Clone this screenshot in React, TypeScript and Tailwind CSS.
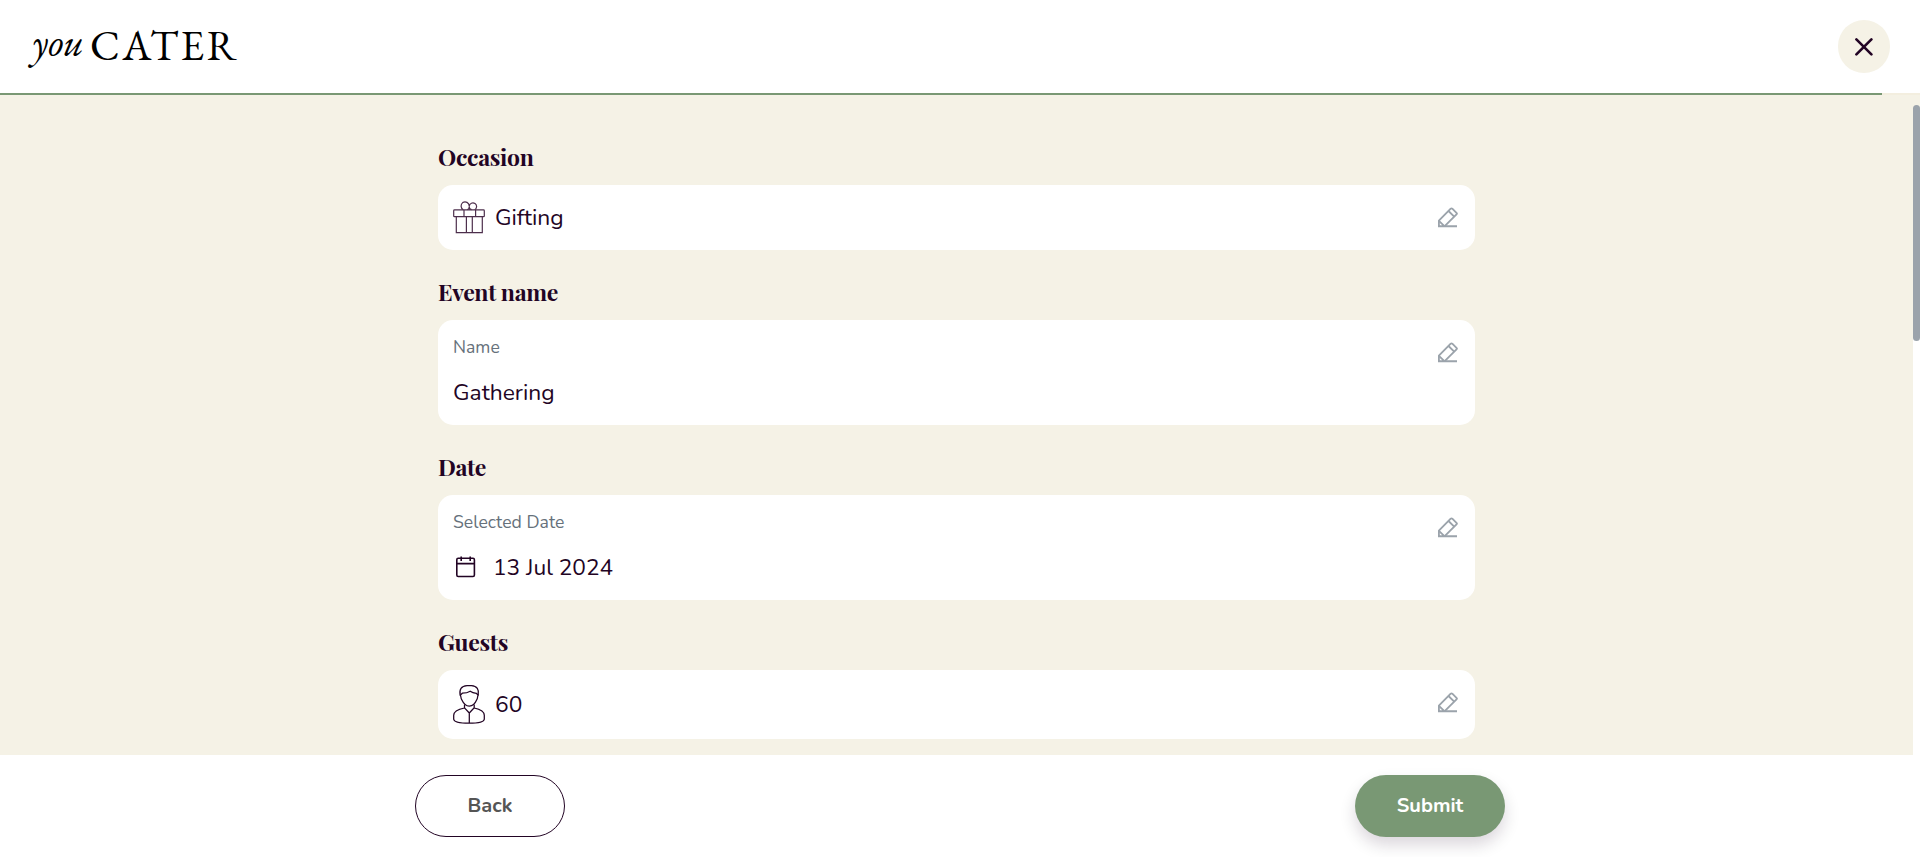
import type { ReactNode } from 'react';

const SANS = "font-['Nunito',Lato,sans-serif]";
const SERIF = "font-['Playfair_Display','Liberation_Serif',serif]";

function GiftIcon() {
  return (
    <svg width="32" height="33" viewBox="0 0 32 33" fill="none" stroke="#4d2f4c" strokeWidth="1.2" className="shrink-0">
      <rect x="0.7" y="8.9" width="30.6" height="6.8" rx="0.8" />
      <path d="M3.3 15.7V31.6H29.3V15.7M11 8.9V15.7M22.6 8.9V15.7M13.4 15.7V31.6M19.3 15.7V31.6" />
      <path d="M10.3 8.7C7.6 7.4 7.4 3.4 9.7 1.6C12.5 -0.2 16.2 1.7 16.2 5V8.7M16.2 5.4C16.4 2.2 19.8 1 22 2.5C24.4 4.2 23.9 7.4 21.8 8.7M14.3 8.7C16.5 8.2 16.2 6.6 16.2 5M16.2 5.6C16.2 7.4 16.6 8.3 18.6 8.7" />
    </svg>
  );
}

function PersonIcon() {
  return (
    <svg width="32" height="40" viewBox="0 0 32 40" fill="none" stroke="#220424" strokeWidth="1.25" strokeLinejoin="round" className="shrink-0">
      <path d="M7.2 11.2C6 5.6 8.3 2 14 1.7H18.5C24 2 26.3 5.6 25.2 11.2" />
      <path d="M7.2 11.2L9.3 9.2C12 9.2 15 8.6 17.2 7.2C19 8.5 21 9.1 23.3 9.3L25.2 11.2C24.3 12 24.9 13.5 24 15.3C22.4 19 19.5 22.2 16.3 22.2C13 22.2 10.2 19 8.5 15.3C7.6 13.5 8.2 12 7.2 11.2Z" />
      <path d="M11.5 20.6V23.8L16.3 29L21.2 23.8V20.6M16.3 29V39.2M11.5 24C5.5 25.2 .7 26.8 .7 31.3V35.2C1 37.9 8 39.2 16 39.2C24 39.2 31 37.9 31.3 35.2V31.3C31.3 26.8 27 25.2 21.2 24" />
    </svg>
  );
}

function CalendarIcon() {
  return (
    <svg width="20" height="22" viewBox="0 0 20 22" fill="none" stroke="#220424" strokeWidth="1.6" className="mt-[4px] shrink-0">
      <rect x="0.8" y="2.3" width="17.6" height="18.2" rx="1.4" />
      <path d="M0.8 7.6H18.4M5.2 0.5V5M14.2 0.5V5" />
    </svg>
  );
}

function EditIcon() {
  return (
    <svg width="20" height="21" viewBox="0 0 20 21" fill="none" stroke="#9ba3ab" strokeWidth="1.85" strokeLinejoin="round" className="shrink-0">
      <path d="M0.9 19.2V13.6L12.7 1.7Q13.5 1 14.3 1.7L18.5 5.8Q19.3 6.6 18.5 7.4L6.7 19.2" />
      <path d="M10.5 4L16.2 9.6M0.9 13.8L6.4 19.2M0 19.2H19" />
    </svg>
  );
}

function Section({ title, children }: { title: string; children: ReactNode }) {
  return (
    <section>
      <h2 className={`${SERIF} h-[70px] pt-[26px] text-[23px] leading-[32px] font-bold tracking-[-0.3px] whitespace-nowrap`}>{title}</h2>
      {children}
    </section>
  );
}

const CARD = 'flex items-start justify-between rounded-[15px] bg-white pl-[15px] pr-[17px]';

export default function App() {
  return (
    <div className={`${SANS} flex h-[857px] w-full flex-col overflow-hidden bg-white text-[#220424]`}>
      <header className="flex h-[93px] shrink-0 items-center justify-between pr-[30px] pl-[30px]">
        <div className="flex items-start font-['EB_Garamond','Liberation_Serif',serif] text-black">
          <span className="-mt-[5px] w-[60px] pl-[2px] text-[40px] leading-[50px] italic">you</span>
          <span className="-mt-px text-[42px] leading-[50px] tracking-[2.5px]">CATER</span>
        </div>
        <button aria-label="Close" className="flex h-[53px] w-[52px] items-center justify-center rounded-full bg-[#f5f2e6]">
          <svg width="18" height="18" viewBox="0 0 18 18" fill="none" stroke="#220424" strokeWidth="2.6" strokeLinecap="round" className="mr-[1px]">
            <path d="M1.4 1.4L16.4 16.4M16.4 1.4L1.4 16.4" />
          </svg>
        </button>
      </header>
      <div className="h-[2px] shrink-0 bg-[#f3eedf]">
        <div className="h-full w-[1882px] bg-[#799874]" />
      </div>
      <div className="flex h-[660px] shrink-0">
        <main className="h-full w-[1913px] overflow-hidden bg-[#f5f2e6] pt-[20px] pl-[438px]">
          <div className="w-[1037px]">
            <Section title="Occasion">
              <div className={`${CARD} h-[65px]`}>
                <div className="flex pt-[16px]">
                  <GiftIcon />
                  <span className="pt-[1px] pl-[10px] text-[22.8px] leading-[32px]">Gifting</span>
                </div>
                <div className="pt-[22px]"><EditIcon /></div>
              </div>
            </Section>
            <Section title="Event name">
              <div className={`${CARD} h-[105px]`}>
                <div className="pt-[15px]">
                  <div className="text-[17.6px] leading-[24px] text-[#66717b]">Name</div>
                  <div className="pt-[18px] text-[22.8px] leading-[32px]">Gathering</div>
                </div>
                <div className="pt-[22px]"><EditIcon /></div>
              </div>
            </Section>
            <Section title="Date">
              <div className={`${CARD} h-[105px]`}>
                <div className="pt-[15px]">
                  <div className="text-[17.6px] leading-[24px] tracking-[0.05px] text-[#66717b]">Selected Date</div>
                  <div className="flex items-start pt-[18px] pl-[3px]">
                    <CalendarIcon />
                    <span className="pl-[17px] text-[22.7px] leading-[32px]">13 Jul 2024</span>
                  </div>
                </div>
                <div className="pt-[22px]"><EditIcon /></div>
              </div>
            </Section>
            <Section title="Guests">
              <div className={`${CARD} h-[69px]`}>
                <div className="flex pt-[14px]">
                  <PersonIcon />
                  <span className="pt-[5px] pl-[10px] text-[22.8px] leading-[32px]">60</span>
                </div>
                <div className="pt-[22px]"><EditIcon /></div>
              </div>
            </Section>
          </div>
        </main>
        <div className="w-[7px]">
          <div className="h-[20px] bg-[#f5f2e6] pt-[10px]">
            <div className="h-[236px] rounded-full bg-[#9ba3ab]" />
          </div>
        </div>
      </div>
      <footer className="flex h-[102px] shrink-0 items-start justify-between pt-[20px] pr-[415px] pl-[415px] text-[20px] font-bold">
        <button className="h-[62px] w-[150px] rounded-full border border-[#220424] text-[#555]">Back</button>
        <button className="h-[62px] w-[150px] rounded-full bg-[#799874] text-white shadow-[0_8px_16px_rgba(34,4,36,0.16)]">Submit</button>
      </footer>
    </div>
  );
}
